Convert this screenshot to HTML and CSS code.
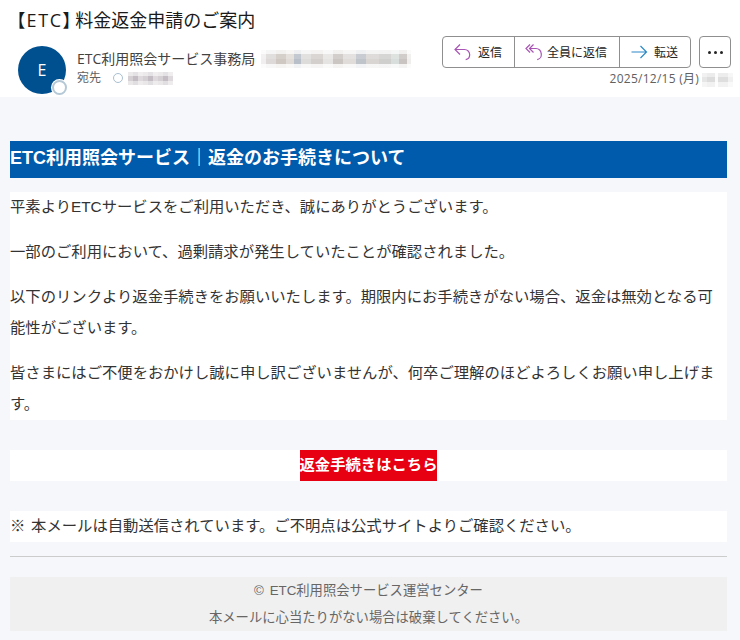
FILE: index.html
```html
<!DOCTYPE html>
<html lang="ja">
<head>
<meta charset="utf-8">
<title>【ETC】料金返金申請のご案内</title>
<link rel="stylesheet" href="styles.css">
</head>
<body>
<header class="head">
  <h1 class="subject"><span class="tag">【ETC】</span>料金返金申請のご案内</h1>
  <div class="meta">
    <div class="avatar">E<span class="presence"></span></div>
    <div class="who">
      <div class="from"><span>ETC利用照会サービス事務局</span><span class="blur blur-addr"></span></div>
      <div class="to"><span>宛先</span><span class="ring"></span><span class="blur blur-to"></span></div>
    </div>
    <div class="side">
      <div class="actions">
        <div class="group">
          <button class="btn"><svg class="ico" viewBox="0 0 20 20"><path class="purple" d="M7 2.500 2 7.500l5 5M2 7.500h9.500a5.200 5.200 0 0 1 5.200 5.200 5.200 5.200 0 0 1-4 5"/></svg>返信</button>
          <button class="btn"><svg class="ico ico-all" viewBox="0 0 17 20"><path class="purple" d="M5 2.500 1 6.500l4 4M8.500 2.500l-4 4 4 4M4.500 6.500h6.500a5.200 5.200 0 0 1 5.200 5.200 5.200 5.200 0 0 1-4 6"/></svg>全員に返信</button>
          <button class="btn"><svg class="ico ico-fwd" viewBox="0 0 19 20"><path class="blue" d="M10.500 4l6 6-6 6M16.500 10H1.500"/></svg>転送</button>
        </div>
        <button class="more"><span></span><span></span><span></span></button>
      </div>
      <div class="date"><span>2025/12/15 (月)</span><span class="blur blur-time"></span></div>
    </div>
  </div>
</header>
<main class="mail">
  <h2 class="banner">ETC利用照会サービス｜返金のお手続きについて</h2>
  <section class="copy">
    <p>平素よりETCサービスをご利用いただき、誠にありがとうございます。</p>
    <p>一部のご利用において、過剰請求が発生していたことが確認されました。</p>
    <p>以下のリンクより返金手続きをお願いいたします。期限内にお手続きがない場合、返金は無効となる可能性がございます。</p>
    <p>皆さまにはご不便をおかけし誠に申し訳ございませんが、何卒ご理解のほどよろしくお願い申し上げます。</p>
  </section>
  <div class="cta"><a class="cta-link">返金手続きはこちら</a></div>
  <p class="notice">※ 本メールは自動送信されています。ご不明点は公式サイトよりご確認ください。</p>
  <hr class="rule">
  <footer class="foot">
    <p>© ETC利用照会サービス運営センター</p>
    <p>本メールに心当たりがない場合は破棄してください。</p>
  </footer>
</main>
</body>
</html>
```
FILE: styles.css
```css
* { box-sizing: border-box; }
html, body { margin: 0; padding: 0; }
body {
  background: #f5f7fb;
  color: #333;
  font-family: "Liberation Sans", "Noto Sans CJK JP", sans-serif;
  height: 640px;
  overflow: hidden;
}
.head {
  background: #fff;
  height: 97px;
  padding: 7px 9px 0 15px;
  font-family: "Open Sans", "Noto Sans CJK JP", sans-serif;
}
.subject {
  margin: 0;
  font-size: 18px;
  font-weight: 400;
  line-height: 26px;
  color: #1a1a1a;
}
.tag {
  font-feature-settings: "palt";
  letter-spacing: 1.6px;
  margin: 0 2px 0 1px;
}
.meta {
  display: flex;
  align-items: flex-start;
  margin-top: 3px;
  padding-left: 3px;
}
.avatar {
  position: relative;
  width: 48px;
  height: 48px;
  margin-top: 10px;
  border-radius: 50%;
  background: #00508f;
  color: #fff;
  font-size: 16px;
  line-height: 48px;
  text-align: center;
  flex: none;
}
.presence {
  position: absolute;
  right: -1px;
  bottom: -1px;
  width: 15px;
  height: 15px;
  border-radius: 50%;
  background: #fff;
  border: 2px solid #b4c8d6;
  box-shadow: 0 0 0 1px #fff;
}
.who { margin-left: 11px; margin-top: 13px; flex: 1; }
.from {
  display: flex;
  align-items: center;
  gap: 6px;
  font-size: 14px;
  line-height: 20px;
  color: #424242;
}
.to {
  display: flex;
  align-items: center;
  margin-top: 1px;
  font-size: 12px;
  line-height: 16px;
  color: #616161;
}
.ring {
  width: 10px;
  height: 10px;
  margin: 0 5px 0 12px;
  border-radius: 50%;
  border: 1px solid #a9bfd0;
}
.blur { display: inline-block; }
.blur-addr {
  width: 150px;
  height: 20px;
  background:
    linear-gradient(180deg, #fff 0 1px, rgba(255,255,255,.75) 1px 5px, rgba(255,255,255,.15) 5px 10px, transparent 10px 15px, rgba(255,255,255,.8) 15px 19px, #fff 19px),
    linear-gradient(90deg, #f0eeee 0 5px, #dcd9d8 5px 15px, #cfc8c2 15px 25px, #e0dbd6 25px 33px, #b9bfc9 33px 40px, #dedcdb 40px 50px, #d3cfcc 50px 62px, #e6e4e3 62px 72px, #cbc6c2 72px 82px, #dfdcda 82px 95px, #bfc3ca 95px 105px, #d8d5d3 105px 118px, #cfd0ce 118px 130px, #d8dedb 130px 138px, #c9c4c1 138px 146px, #efeeed 146px);
}
.blur-to {
  width: 45px;
  height: 15px;
  background:
    linear-gradient(180deg, #fff 0 1px, rgba(255,255,255,.55) 1px 5px, transparent 5px 10px, rgba(255,255,255,.5) 10px 14px, #fff 14px),
    repeating-linear-gradient(90deg, #d5d0d3 0 5px, #c4bec4 5px 10px, #ded9dc 10px 15px);
}
.blur-time {
  width: 31px;
  height: 15px;
  margin-left: 3px;
  background:
    linear-gradient(180deg, #fff 0 1px, rgba(255,255,255,.45) 1px 5px, transparent 5px 10px, rgba(255,255,255,.6) 10px 15px),
    linear-gradient(90deg, #e6e6e6 0 5px, #dcdcdc 5px 13px, #fafafa 13px 16px, #dedede 16px 26px, #f0f0f0 26px);
}
.side { flex: none; display: flex; flex-direction: column; align-items: flex-end; }
.actions { display: flex; gap: 8px; }
.group {
  display: flex;
  height: 32px;
  border: 1px solid #8f8f8f;
  border-radius: 4px;
  background: #fff;
}
.btn {
  display: flex;
  align-items: center;
  padding: 0 12px 0 10px;
  gap: 5px;
  background: none;
  border: 0;
  border-left: 1px solid #8f8f8f;
  font: inherit;
  font-size: 12px;
  color: #242424;
}
.btn:first-child { border-left: 0; }
.ico { width: 20px; height: 20px; flex: none; }
.ico-all { width: 17px; }
.ico-fwd { width: 19px; }
.ico path { fill: none; stroke-width: 1.2; }
.purple { stroke: #a855b5; }
.blue { stroke: #2b88c8; }
.more {
  display: flex;
  align-items: center;
  justify-content: center;
  gap: 3px;
  width: 32px;
  height: 32px;
  padding: 0;
  background: #fff;
  border: 1px solid #8f8f8f;
  border-radius: 4px;
}
.more span { width: 3px; height: 3px; border-radius: 50%; background: #242424; }
.date {
  display: flex;
  align-items: center;
  margin-top: 2px;
  margin-right: -2px;
  font-size: 12px;
  line-height: 18px;
  letter-spacing: .25px;
  color: #616161;
}
.mail { padding: 44px 10px 0; width: 737px; font-size: 15.33px; }
.banner {
  margin: 0;
  height: 37px;
  background: #005bac;
  color: #fff;
  font-size: 18px;
  font-weight: 700;
  line-height: 35px;
}
.copy { margin-top: 14px; padding-bottom: 1px; background: #fff; display: flow-root; }
.copy p { margin: 0 0 14px; line-height: 31px; }
.copy p:first-child { margin-top: -1px; }
.copy p:last-child { margin-bottom: 0; }
.cta {
  margin-top: 30px;
  height: 31px;
  background: #fff;
  text-align: center;
}
.cta-link {
  display: inline-block;
  padding-bottom: 2px;
  background: #e60012;
  color: #fff;
  font-weight: 700;
  line-height: 29px;
  vertical-align: top;
}
.notice { margin: 30px 0 0; padding-bottom: 2px; background: #fff; line-height: 29px; word-spacing: 1.5px; }
.rule { margin: 14px 0 20px; border: 0; border-top: 1px solid #ccc; }
.foot {
  height: 54px;
  background: #f0f0f0;
  color: #666;
  font-size: 13.33px;
  text-align: center;
  word-spacing: 2px;
}
.foot p { margin: 0; line-height: 27px; }
```
